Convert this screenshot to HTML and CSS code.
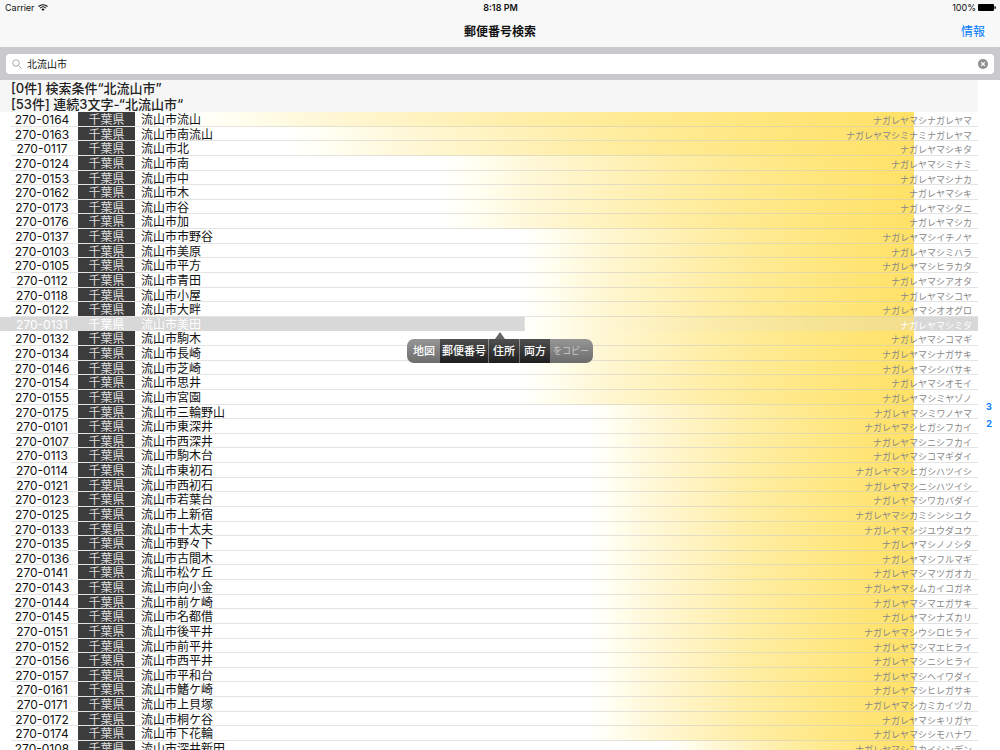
FILE: index.html
```html
<!DOCTYPE html>
<html lang="ja">
<head>
<meta charset="utf-8">
<title>郵便番号検索</title>
<link rel="stylesheet" href="styles.css">
</head>
<body>
<header class="top">
  <div class="status">
    <div class="carrier">Carrier
      <svg class="wifi" viewBox="0 0 20 14" aria-hidden="true"><path d="M1 5a13 13 0 0 1 18 0M4.200 8.200a8.500 8.500 0 0 1 11.600 0" fill="none" stroke="#111" stroke-width="2.200"/><path d="M6.800 10.300a4.800 4.800 0 0 1 6.400 0L10 13.800z" fill="#111"/></svg>
    </div>
    <div class="clock">8:18 PM</div>
    <div class="power">100%
      <svg class="battery" viewBox="0 0 36 14" aria-hidden="true"><rect width="32" height="14" rx="2"/><path d="M33 4q3 0 3 3t-3 3z"/></svg>
    </div>
  </div>
  <nav class="nav">
    <h1 class="title">郵便番号検索</h1>
    <a class="info" href="#info">情報</a>
  </nav>
</header>
<form class="searchbar">
  <label class="field">
    <svg class="glass" viewBox="0 0 20 20" aria-label="検索"><circle cx="8" cy="8" r="6.500"/><path d="M12.800 12.800L19 19"/></svg>
    <input class="query" type="text" value="北流山市" aria-label="検索">
    <button class="clear" type="button" aria-label="消去"><svg viewBox="0 0 20 20"><circle cx="10" cy="10" r="10" fill="#8e8e93"/><path d="M6.200 6.200l7.600 7.600M13.800 6.200l-7.600 7.600" stroke="#fff" stroke-width="2.600"/></svg></button>
  </label>
</form>
<main class="content">
  <div class="list">
    <h2 class="section">[0件] 検索条件“北流山市”</h2>
    <h2 class="section">[53件] 連続3文字-“北流山市“</h2>
    <table class="results"><tbody id="rows"></tbody></table>
    <div class="menu" role="toolbar">
      <button class="item edge" type="button">地図</button>
      <button class="item wide" type="button">郵便番号</button>
      <button class="item" type="button">住所</button>
      <button class="item" type="button">両方</button>
      <span class="note">をコピー</span>
    </div>
  </div>
  <nav class="index"><a href="#s3">3</a><a href="#s2">2</a></nav>
</main>
<script src="rows.js"></script>
</body>
</html>
```

FILE: rows.js
```javascript
const rows = `0164 流山 ナガレヤマ
0163 南流山 ミナミナガレヤマ
0117 北 キタ
0124 南 ミナミ
0153 中 ナカ
0162 木 キ
0173 谷 タニ
0176 加 カ
0137 市野谷 イチノヤ
0103 美原 ミハラ
0105 平方 ヒラカタ
0112 青田 アオタ
0118 小屋 コヤ
0122 大畔 オオグロ
0131 美田 ミタ
0132 駒木 コマギ
0134 長崎 ナガサキ
0146 芝崎 シバサキ
0154 思井 オモイ
0155 宮園 ミヤゾノ
0175 三輪野山 ミワノヤマ
0101 東深井 ヒガシフカイ
0107 西深井 ニシフカイ
0113 駒木台 コマギダイ
0114 東初石 ヒガシハツイシ
0121 西初石 ニシハツイシ
0123 若葉台 ワカバダイ
0125 上新宿 カミシンシユク
0133 十太夫 ジユウダユウ
0135 野々下 ノノシタ
0136 古間木 フルマギ
0141 松ケ丘 マツガオカ
0143 向小金 ムカイコガネ
0144 前ケ崎 マエガサキ
0145 名都借 ナズカリ
0151 後平井 ウシロヒライ
0152 前平井 マエヒライ
0156 西平井 ニシヒライ
0157 平和台 ヘイワダイ
0161 鰭ケ崎 ヒレガサキ
0171 上貝塚 カミカイヅカ
0172 桐ケ谷 キリガヤ
0174 下花輪 シモハナワ
0108 深井新田 フカイシンデン`.split("\n").map(line => line.split(" "));

const level = i => i < 1 ? "m1" : i < 3 ? "m2" : i < 8 ? "m3" : i < 20 ? "m4" : i < 43 ? "m5" : "m6";

document.getElementById("rows").innerHTML = rows.map(([zip, town, kana], i) =>
  `<tr class="row ${level(i)}${zip === "0131" ? " selected" : ""}">
    <td class="zip">270-${zip}</td><td class="pref">千葉県</td>
    <td class="town">流山市${town}</td><td class="kana">ナガレヤマシ${kana}</td>
  </tr>`).join("");
```

FILE: styles.css
```css
* { box-sizing: border-box; }
body {
  margin: 0;
  height: 100vh;
  overflow: hidden;
  display: flex;
  flex-direction: column;
  background: #fff;
  color: #111;
  font-family: Inter, "Noto Sans CJK JP", sans-serif;
  font-size: 12px;
}
button { border: 0; padding: 0; background: none; font: inherit; color: inherit; }
.top { background: #f8f8f8; }
.status {
  display: grid;
  grid-template-columns: 1fr auto 1fr;
  align-items: center;
  height: 15px;
  padding: 0 4px 0 5px;
  font-size: 9px;
}
.carrier, .power { display: flex; align-items: center; gap: 3px; }
.power { justify-content: flex-end; gap: 2px; }
.clock { font-weight: 600; }
.wifi { width: 10px; height: 7px; }
.battery { width: 18px; height: 7px; }
.nav {
  display: grid;
  grid-template-columns: 1fr auto 1fr;
  align-items: center;
  height: 32px;
  padding: 0 15px 2px;
}
.title { grid-column: 2; margin: 0; font-size: 12px; font-weight: 600; }
.info { justify-self: end; color: #007aff; text-decoration: none; }
.searchbar { padding: 7px 6px 6px; background: #c9c9ce; }
.field {
  display: flex;
  align-items: center;
  gap: 5px;
  height: 20px;
  padding: 0 6px;
  border-radius: 4px;
  background: #fff;
}
.glass { width: 10px; height: 10px; fill: none; stroke: #8e8e93; stroke-width: 1.5; }
.query {
  flex: 1;
  min-width: 0;
  border: 0;
  padding: 0 0 2px;
  background: none;
  outline: 0;
  color: #111;
  font: inherit;
  font-size: 10px;
}
.clear, .clear svg { display: block; width: 10px; height: 10px; }
.content { flex: 1; min-height: 0; display: flex; }
.list { flex: 1; position: relative; }
.section {
  margin: 0;
  height: 16px;
  padding-left: 11px;
  background: #f6f6f6;
  font-size: 13px;
  line-height: 16px;
  font-weight: 500;
  color: #222;
}
.results, .results tbody { display: block; }
.row {
  --start: 60%;
  --span: calc(93.5% - var(--start));
  --match: linear-gradient(90deg,
    #fff var(--start),
    #fffff2 calc(var(--start) + var(--span) * .07),
    #fff8da calc(var(--start) + var(--span) * .18),
    #ffeea6 calc(var(--start) + var(--span) * .48),
    #ffe781 calc(var(--start) + var(--span) * .75),
    #ffe166 93.5%, #fff 93.5%);
  display: grid;
  grid-template: 100% / 67px 57px 1fr auto;
  height: 1.22em;
  padding: 0 6px 0 11px;
  line-height: 1.22;
  background: linear-gradient(#c8c8c880, #c8c8c880) 11px 100% / 100% 1px no-repeat, var(--match);
}
.m1 { --start: 18%; }
.m2 { --start: 29%; }
.m3 { --start: 45%; }
.m4 { --start: 53%; }
.m6 { --start: 68%; }
.row td { display: block; padding: 1px 0 0; white-space: nowrap; }
.row .zip { padding-right: 5px; text-align: center; }
.row .pref { margin-bottom: 1px; background: #3c3c3c; color: #ddd; text-align: center; overflow: hidden; }
.row .town { padding-left: 6px; }
.row .kana { padding-top: 2px; font-size: 9px; line-height: 14px; color: #888; }
.selected {
  color: #fff;
  background:
    linear-gradient(90deg, #d8d8d8 53.6%, #0000 53.7%, #0000 60%, #d8d8d855 93.5%, #d8d8d8 93.5%),
    var(--match);
}
.row.selected .pref { background: none; color: #fff; }
.row.selected .kana { color: #fff; }
.menu {
  position: absolute;
  top: 259px;
  left: 500px;
  transform: translateX(-50%);
  display: flex;
  gap: 1px;
  height: 24px;
  border-radius: 7px;
  background: linear-gradient(#969696, #6c6c6c);
  color: #fff;
  font-size: 11px;
  font-weight: 500;
}
.menu::before {
  content: "";
  position: absolute;
  top: -7px;
  left: 50%;
  margin-left: -5px;
  border: 5px solid transparent;
  border-top: 0;
  border-bottom: 7px solid #666;
}
.item { padding: 0 4px 2px; background: linear-gradient(#505050, #1e1e1e); }
.wide { padding: 0 2px 2px; }
.edge { padding: 0 4px 2px 6px; background: none; }
.note { padding: 0 4px 0 2px; font-size: 9px; font-weight: 400; line-height: 24px; color: #ccc; }
.index {
  width: 22px;
  display: flex;
  flex-direction: column;
  align-items: center;
  justify-content: center;
  gap: 6px;
}
.index a { color: #007aff; font-size: 9px; font-weight: 700; line-height: 11px; text-decoration: none; }
```
